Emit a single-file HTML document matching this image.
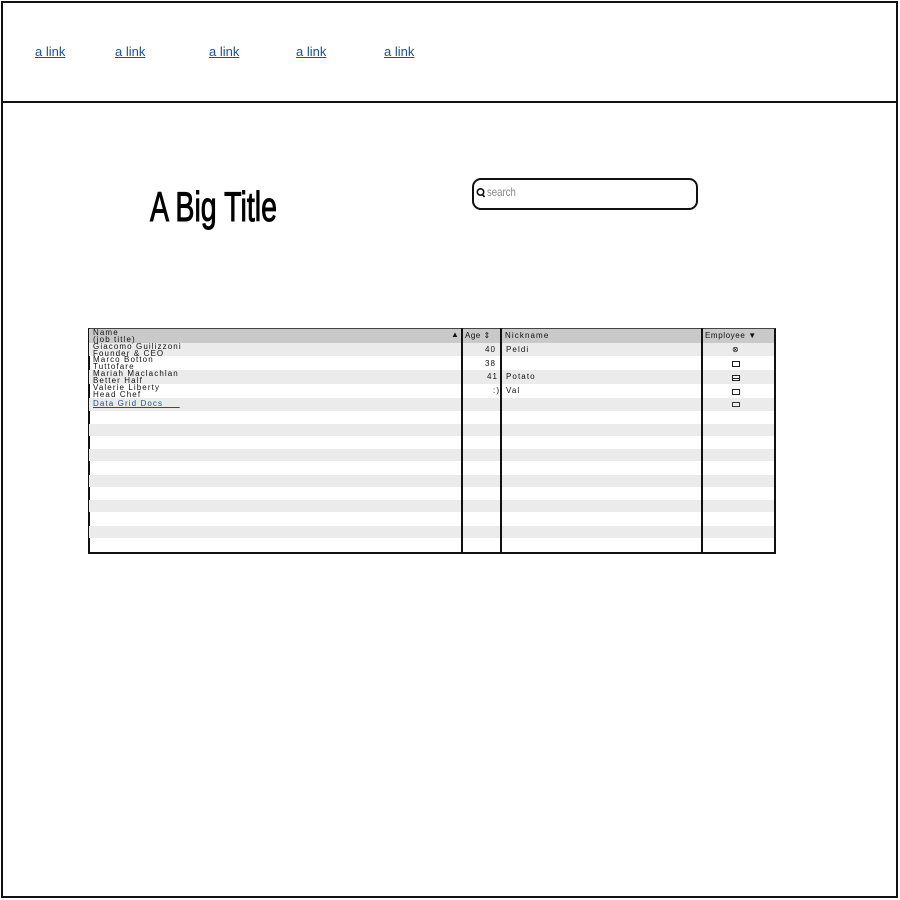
<!DOCTYPE html>
<html><head><meta charset="utf-8"><style>
*{margin:0;padding:0;box-sizing:border-box}
body{width:900px;height:900px;background:#fff;position:relative;overflow:hidden;font-family:"Liberation Sans",sans-serif}
.a{position:absolute}
.lk{position:absolute;top:44px;font-size:13px;color:#1a4f9c;text-decoration:underline}
.t{font-size:8px;line-height:6.8px;color:#111;position:absolute;white-space:nowrap;letter-spacing:1.1px}
.r{position:absolute;left:89px;width:685px}
.g{background:#ebebeb}
.v{position:absolute;top:328px;height:225px;width:2px;background:#111}
</style></head><body>
<div class="a" style="left:1px;top:1px;width:897px;height:897px;border:2px solid #111"></div>
<div class="a" style="left:1px;top:1px;width:897px;height:102px;border:2px solid #111"></div>
<a class="lk" style="left:35px">a link</a>
<a class="lk" style="left:115px">a link</a>
<a class="lk" style="left:209px">a link</a>
<a class="lk" style="left:296px">a link</a>
<a class="lk" style="left:384px">a link</a>
<div class="a" style="left:150px;top:182px;font-size:42px;line-height:50px;color:#000;transform:scaleX(0.68);transform-origin:left;-webkit-text-stroke:1px #000">A Big Title</div>
<div class="a" style="left:472px;top:178px;width:226px;height:32px;border:2px solid #111;border-radius:9px"></div>
<svg class="a" style="left:476px;top:187px" width="10" height="12" viewBox="0 0 10 12"><circle cx="4.5" cy="5" r="3.2" fill="none" stroke="#111" stroke-width="1.6"/><path d="M6.5 7.5 L8.5 10" stroke="#111" stroke-width="1.8"/></svg>
<div class="a" style="left:487px;top:185px;font-size:12px;color:#888;transform:scaleX(0.8);transform-origin:left">search</div>

<div class="a" style="left:88px;top:328px;width:688px;height:226px;border:2px solid #111;border-top:1px solid #444"></div>
<div class="r" style="top:329px;height:14px;background:#c9c9c9"></div>
<div class="r g" style="top:343px;height:13px"></div>
<div class="r g" style="top:370px;height:14px"></div>
<div class="r g" style="top:398px;height:13px"></div>
<div class="r g" style="top:424px;height:12px"></div>
<div class="r g" style="top:449px;height:12px"></div>
<div class="r g" style="top:475px;height:12px"></div>
<div class="r g" style="top:500px;height:12px"></div>
<div class="r g" style="top:526px;height:12px"></div>
<div class="v" style="left:461px"></div>
<div class="v" style="left:500px"></div>
<div class="v" style="left:701px"></div>

<div class="t" style="left:93px;top:330px">Name<br>(job title)</div>
<div class="t" style="left:451px;top:332px">▲</div>
<div class="t" style="left:465px;top:333px;letter-spacing:0.5px">Age ⇕</div>
<div class="t" style="left:505px;top:333px">Nickname</div>
<div class="t" style="left:705px;top:333px;letter-spacing:0.6px">Employee ▼</div>
<div class="t" style="left:93px;top:344px">Giacomo Guilizzoni<br>Founder &amp; CEO</div>
<div class="t" style="left:93px;top:357px">Marco Botton<br>Tuttofare</div>
<div class="t" style="left:93px;top:371px">Mariah Maclachlan<br>Better Half</div>
<div class="t" style="left:93px;top:385px">Valerie Liberty<br>Head Chef</div>
<div class="t" style="left:93px;top:401px;color:#1a4f9c;text-decoration:underline">Data Grid Docs&nbsp;&nbsp;&nbsp;&nbsp;&nbsp;</div>
<div class="t" style="left:485px;top:347px">40</div>
<div class="t" style="left:485px;top:361px">38</div>
<div class="t" style="left:487px;top:374px">41</div>
<div class="t" style="left:493px;top:388px">:)</div>
<div class="t" style="left:506px;top:347px">Peldi</div>
<div class="t" style="left:506px;top:374px">Potato</div>
<div class="t" style="left:506px;top:388px">Val</div>
<div class="t" style="left:732px;top:347px">⊗</div>
<div class="a" style="left:732px;top:361px;width:8px;height:6px;border:1px solid #222"></div>
<div class="a" style="left:732px;top:375px;width:8px;height:6px;border:1px solid #222;background:linear-gradient(#fff 2px,#222 2px,#222 3px,#fff 3px)"></div>
<div class="a" style="left:732px;top:389px;width:8px;height:6px;border:1px solid #222"></div>
<div class="a" style="left:732px;top:402px;width:8px;height:5px;border:1px solid #333"></div>
</body></html>
